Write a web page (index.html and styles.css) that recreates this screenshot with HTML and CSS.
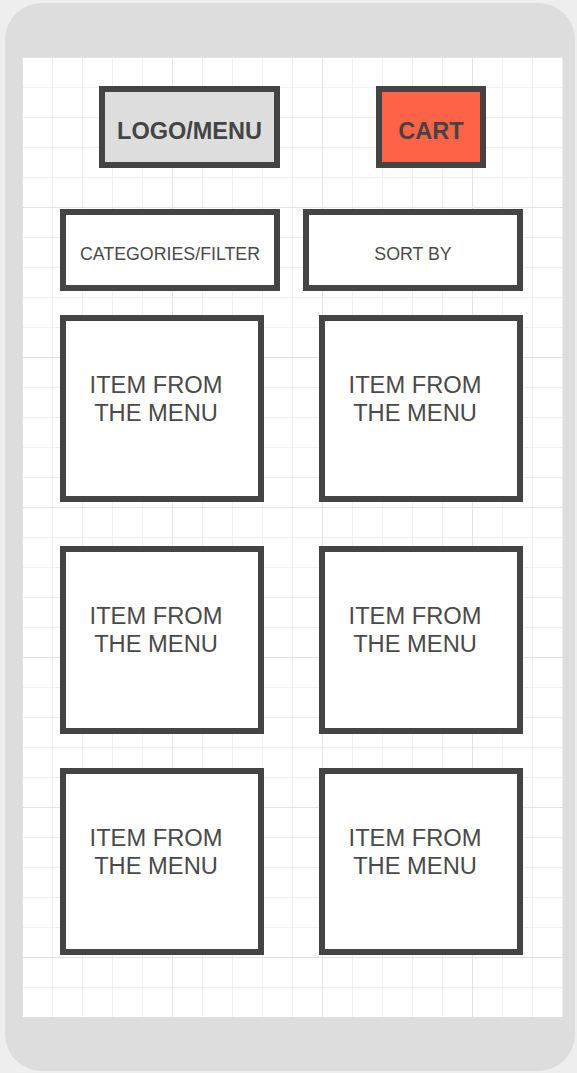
FILE: index.html
```html
<!DOCTYPE html>
<html lang="en">
<head>
  <meta charset="UTF-8" />
  <meta name="viewport" content="width=device-width, initial-scale=1.0" />
  <title>Menu Wireframe</title>
  <link rel="stylesheet" href="styles.css">
</head>
<body>
  <div class="phone">
    <div class="screen">
      <div class="topbar">
        <div class="box logo">LOGO/MENU</div>
        <div class="box cart">CART</div>
      </div>
      <div class="filters">
        <div class="box filter">CATEGORIES/FILTER</div>
        <div class="box filter">SORT BY</div>
      </div>
      <div class="items">
        <div class="row">
          <div class="item">ITEM FROM<br>THE MENU</div>
          <div class="item">ITEM FROM<br>THE MENU</div>
        </div>
        <div class="row">
          <div class="item">ITEM FROM<br>THE MENU</div>
          <div class="item">ITEM FROM<br>THE MENU</div>
        </div>
        <div class="row">
          <div class="item">ITEM FROM<br>THE MENU</div>
          <div class="item">ITEM FROM<br>THE MENU</div>
        </div>
      </div>
    </div>
  </div>
</body>
</html>
```

FILE: styles.css
```css
body {
  margin: 0;
  background: #eeeeee;
  font-family: "Liberation Sans", Arial, sans-serif;
  color: #444444;
}
.phone {
  box-sizing: border-box;
  width: 570px;
  height: 1068px;
  margin: 3px 0 0 5px;
  padding: 54px 12px 54px 17px;
  background: #dddddd;
  border-radius: 37px;
}
.screen {
  box-sizing: border-box;
  width: 541px;
  height: 960px;
  padding: 29px 40px 0 38px;
  background-color: #ffffff;
  background-image:
    linear-gradient(to right, #e3e3e3 1px, transparent 1px),
    linear-gradient(to bottom, #e3e3e3 1px, transparent 1px),
    linear-gradient(to right, #efefef 1px, transparent 1px),
    linear-gradient(to bottom, #efefef 1px, transparent 1px);
  background-size: 150px 150px, 150px 150px, 30px 30px, 30px 30px;
}
.box {
  box-sizing: border-box;
  height: 82px;
  padding-top: 8px;
  border: 6px solid #444444;
  background: #ffffff;
  display: flex;
  justify-content: center;
  align-items: center;
}
.topbar {
  display: flex;
  gap: 96px;
  padding-left: 39px;
}
.logo {
  width: 181px;
  background: #dddddd;
  font-size: 23.5px;
  font-weight: bold;
}
.cart {
  width: 110px;
  background: #ff6347;
  font-size: 23.5px;
  font-weight: bold;
}
.filters {
  display: flex;
  gap: 23px;
  margin-top: 41px;
}
.filter {
  width: 220px;
  font-size: 17.8px;
  color: #4a4a4a;
}
.items {
  margin-top: 24px;
}
.row {
  display: flex;
  gap: 55px;
}
.row:nth-child(2) {
  margin-top: 44px;
}
.row:nth-child(3) {
  margin-top: 34px;
}
.item {
  box-sizing: border-box;
  width: 204px;
  height: 187px;
  padding: 50px 12px 0 0;
  border: 6px solid #444444;
  background: #ffffff;
  text-align: center;
  font-size: 23.7px;
  line-height: 28px;
  color: #4a4a4a;
}
.row:nth-child(2) .item {
  height: 188px;
}
```
